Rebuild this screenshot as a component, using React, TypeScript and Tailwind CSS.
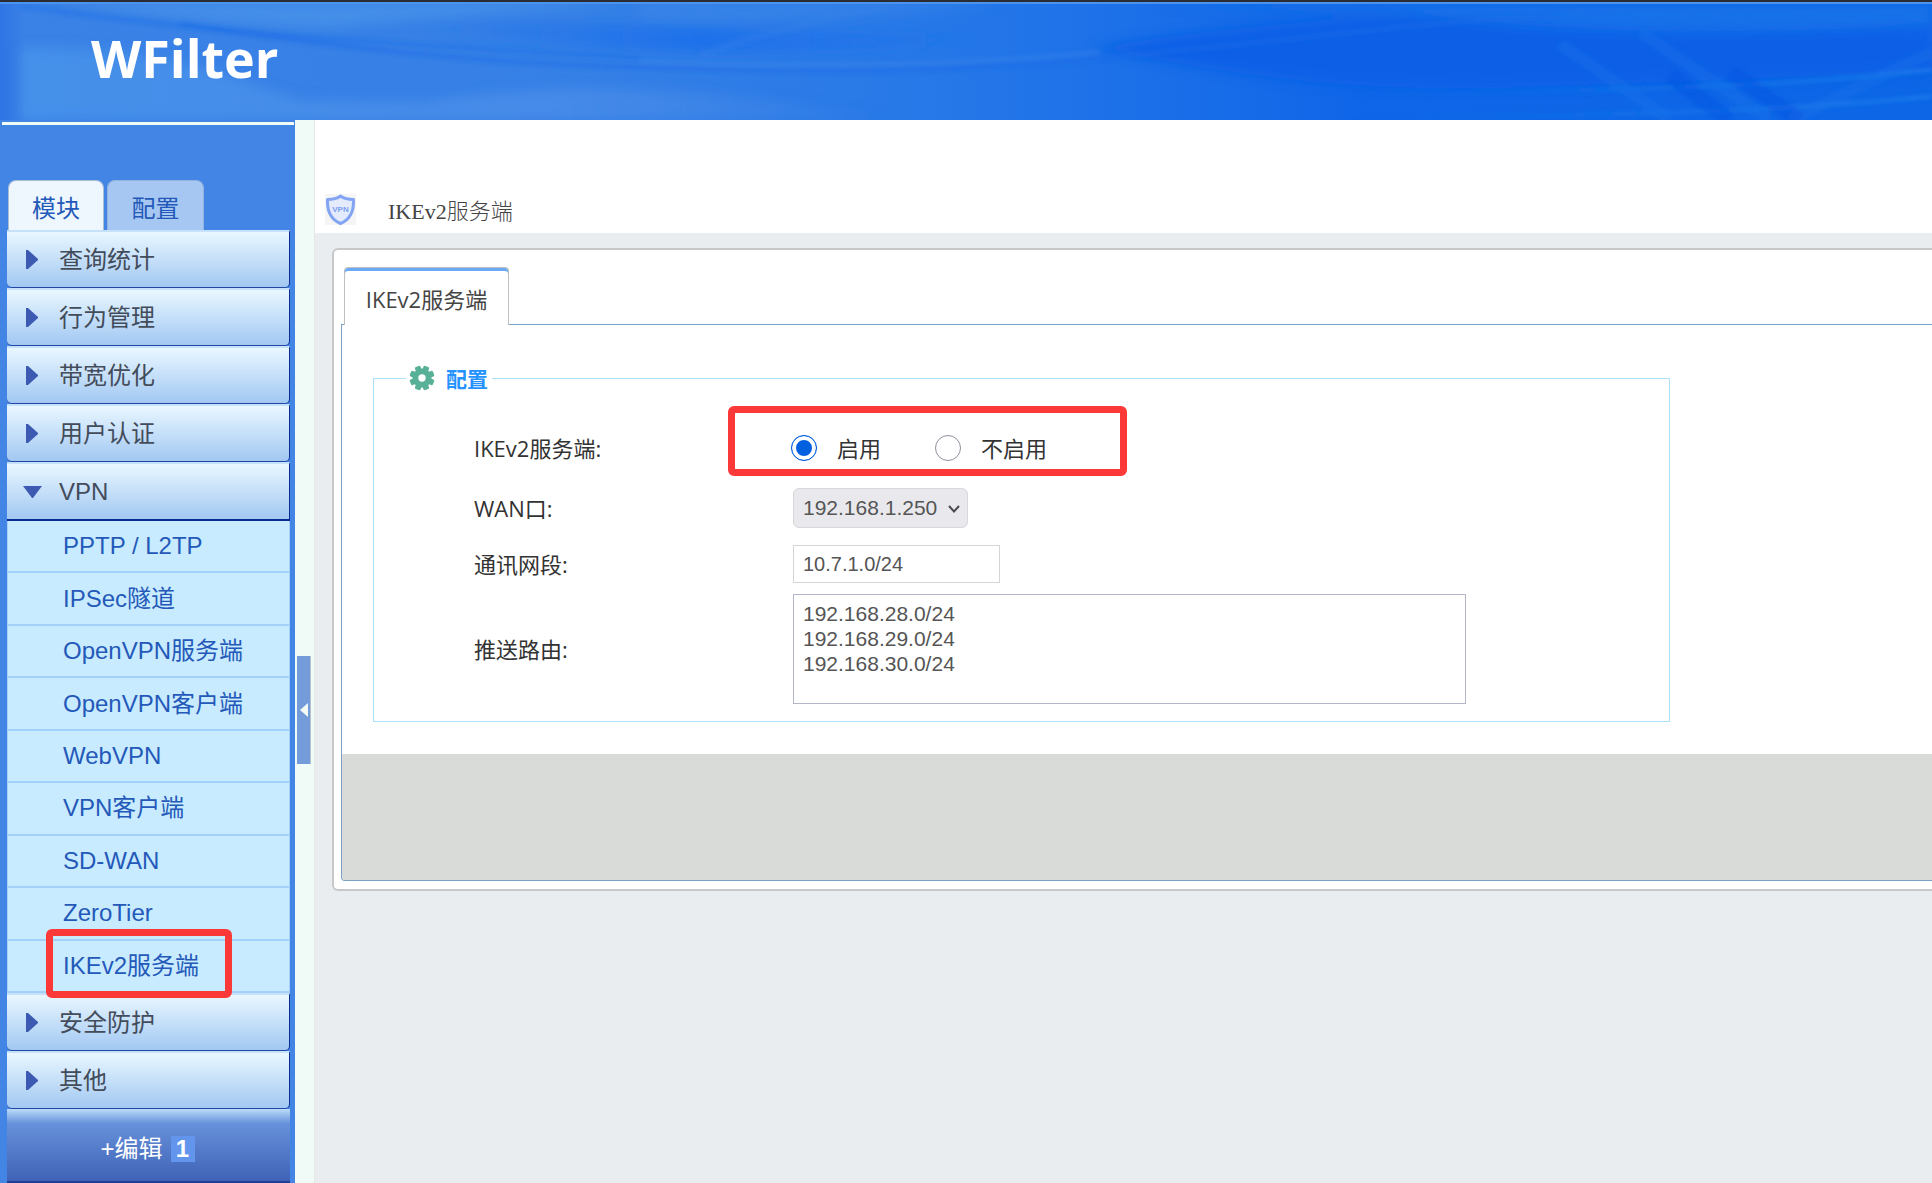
import { useState } from 'react';

type MenuItem = { label: string; open?: boolean; children?: string[] };

const MENU: MenuItem[] = [
  { label: '查询统计' },
  { label: '行为管理' },
  { label: '带宽优化' },
  { label: '用户认证' },
  {
    label: 'VPN',
    open: true,
    children: ['PPTP / L2TP', 'IPSec隧道', 'OpenVPN服务端', 'OpenVPN客户端', 'WebVPN', 'VPN客户端', 'SD-WAN', 'ZeroTier', 'IKEv2服务端'],
  },
  { label: '安全防护' },
  { label: '其他' },
];

const sansCls = "font-['Liberation_Sans','Noto_Sans_CJK_SC',sans-serif]";
const uiCls = "font-['Open_Sans','Noto_Sans_CJK_SC',sans-serif]";
const rowCls = 'grid grid-cols-[319px_1fr] items-center';
const radioCls = 'size-[26px] shrink-0 appearance-none rounded-full border border-[#8f8f9d] bg-white checked:border-[#0060df] checked:bg-[#0060df] checked:shadow-[inset_0_0_0_4px_white]';

export default function App() {
  return (
    <div className={`flex min-h-screen flex-col overflow-hidden bg-white ${sansCls}`}>
      <Header />
      <div className="flex flex-1">
        <Sidebar />
        <div className="w-5 shrink-0 border-r border-[#e6e8e8] bg-[#f0faf7] pt-[536px] pl-[2px]">
          <button aria-label="收起" className="flex h-[108px] w-[14px] items-center justify-center border-r border-[#b9c2cc] bg-[#749cdb]">
            <svg viewBox="0 0 8 14" className="h-[14px] w-2"><path d="M8 0v14L0 7z" fill="#f4faf4" /></svg>
          </button>
        </div>
        <Content />
      </div>
    </div>
  );
}

function Header() {
  return (
    <header className="relative h-[120px] border-t-2 border-[#2b2b33] bg-[#3982e6]">
      <HeaderWaves />
      <h1 className="relative pt-5 pl-[91px] font-['Open_Sans',sans-serif] text-[52px] leading-[72px] font-bold text-white">WFilter</h1>
    </header>
  );
}

function HeaderWaves() {
  return (
    <svg className="absolute inset-0 h-full w-full" viewBox="0 0 1932 118" preserveAspectRatio="none" aria-hidden="true">
      <defs>
        <linearGradient id="base" x1="0" x2="1">
          <stop offset="0" stopColor="#3b82e6" />
          <stop offset="0.3" stopColor="#3580e6" />
          <stop offset="0.5" stopColor="#2577e8" />
          <stop offset="0.7" stopColor="#1066e8" />
          <stop offset="1" stopColor="#0c66e6" />
        </linearGradient>
        <linearGradient id="foot" x1="0" x2="1">
          <stop offset="0" stopColor="#4590e9" />
          <stop offset="0.6" stopColor="#468ae8" />
          <stop offset="1" stopColor="#468ae8" stopOpacity="0" />
        </linearGradient>
        <linearGradient id="band" x1="0" x2="1">
          <stop offset="0" stopColor="#1f71ea" stopOpacity="0" />
          <stop offset="0.5" stopColor="#1f71ea" />
          <stop offset="1" stopColor="#1f71ea" stopOpacity="0.3" />
        </linearGradient>
        <linearGradient id="edge" x1="0" x2="1">
          <stop offset="0" stopColor="#2f74e4" />
          <stop offset="1" stopColor="#2f74e4" stopOpacity="0" />
        </linearGradient>
        <linearGradient id="streak" gradientUnits="userSpaceOnUse" x1="1350" x2="1932" y1="0" y2="0">
          <stop offset="0" stopColor="#1a7cea" stopOpacity="0" />
          <stop offset="1" stopColor="#2080ec" />
        </linearGradient>
        <filter id="soft" x="-10%" y="-40%" width="120%" height="180%"><feGaussianBlur stdDeviation="6" /></filter>
        <filter id="thin" x="-10%" y="-40%" width="120%" height="180%"><feGaussianBlur stdDeviation="2" /></filter>
      </defs>
      <rect width="1932" height="118" fill="url(#base)" />
      <g filter="url(#soft)">
        <path d="M60 0H620C520 10 420 16 330 26C220 22 140 12 60 0Z" fill="#4690e9" opacity="0.9" />
        <path d="M20 46C160 44 220 70 300 98L420 100C500 88 580 84 650 88C740 92 830 104 900 118H20Z" fill="url(#foot)" />
        <path d="M420 20C540 16 680 26 980 36C860 52 640 60 420 30Z" fill="url(#band)" />
        <path d="M640 0H1000C900 14 760 22 640 16Z" fill="#3c87ea" opacity="0.6" />
        <path d="M1090 46C1260 20 1400 10 1520 14L1932 26V70L1500 86C1300 90 1180 60 1090 46Z" fill="#0a61e6" />
        <path d="M1150 2H1932V22C1740 34 1560 32 1400 10Z" fill="#1a78e9" opacity="0.7" />
      </g>
      <g filter="url(#thin)" fill="none">
        <path d="M20 4C220 32 420 44 640 56" stroke="#1f70e9" strokeWidth="4" opacity="0.6" />
        <path d="M180 22C340 46 500 64 680 66C900 74 1040 64 1180 48C1340 34 1440 16 1560 16" stroke="#1a6ae8" strokeWidth="4" opacity="0.6" />
        <path d="M640 60C760 66 960 64 1100 50" stroke="#3c86ea" strokeWidth="4" opacity="0.4" />
        <path d="M700 54C760 30 820 18 890 4" stroke="#3482ea" strokeWidth="8" opacity="0.3" />
        <path d="M1350 90C1640 90 1780 84 1932 68M1350 116C1640 114 1800 108 1932 94" stroke="url(#streak)" strokeWidth="3" />
        <path d="M1560 42L1670 118M1640 30L1770 118M1932 50L1790 118" stroke="#1a78ea" strokeWidth="12" opacity="0.3" />
        <path d="M1670 74L1730 118M1730 70L1800 118" stroke="#0b50e2" strokeWidth="16" opacity="0.4" />
      </g>
      <rect width="24" height="118" fill="url(#edge)" />
      <rect width="1932" height="2" fill="#4a94ee" />
    </svg>
  );
}

function Sidebar() {
  return (
    <nav className="flex w-[295px] shrink-0 flex-col bg-[#4285e4] pt-[2px] pr-px pl-[2px]">
      <div className="h-[3px] bg-[#f0faf7]" />
      <div className="mt-[55px] flex gap-[3px] pl-[6px] text-2xl text-[#2359b8]">
        <button className="h-[50px] w-24 rounded-t-lg border border-b-0 border-[#a9bdd6] bg-[#eef6fe] pt-[6px]">模块</button>
        <button className="h-[50px] w-[97px] rounded-t-lg border border-b-0 border-[#93b2e0] bg-[#a6c7f2] pt-[6px]">配置</button>
      </div>
      <div className="ml-[5px] flex w-[283px] flex-1 flex-col">
        {MENU.map((item) => (
          <div key={item.label}>
            <button
              className={`flex w-full items-center border-t-2 border-r border-t-[#c5e2fa] border-r-[#0a2d8f] bg-linear-to-b from-[#e9f7ff] to-[#a2c8f2] text-2xl text-[#434c5a] ${
                item.open ? 'h-[59px] border-b-2 border-b-[#062c92]' : 'h-[58px] rounded-b-[5px] border-b border-b-[#2346a4]'
              }`}
            >
              <span className="flex w-[52px] justify-center pr-[2px]">
                {item.open ? (
                  <svg viewBox="0 0 19 12" className="h-3 w-[19px]"><path d="M0 0h19L10 12H9z" fill="#3c5ab2" /></svg>
                ) : (
                  <svg viewBox="0 0 12 19" className="h-[19px] w-3"><path d="M0 0h2L12 9v1L2 19H0z" fill="#3c5ab2" /></svg>
                )}
              </span>
              {item.label}
            </button>
            {item.children && <SubMenu items={item.children} />}
          </div>
        ))}
        <button className="flex min-h-[73px] flex-1 items-center justify-center border-b-2 border-[#203f98] bg-linear-to-b from-[#bcdcf8] via-[#6791da] via-20% to-[#3f62b6] pt-2 pr-[2px] text-2xl text-white">
          +编辑
          <span className="ml-2 w-6 bg-[#6495ed] text-center leading-[26px] font-bold">1</span>
        </button>
      </div>
    </nav>
  );
}

function SubMenu({ items }: { items: string[] }) {
  return (
    <ul className="grid h-[472px] auto-rows-fr">
      {items.map((label) => (
        <li key={label} className="relative flex border-x border-b-2 border-x-[#a3d1fa] border-b-[#a3d1fa] bg-[#c8ebff]">
          <a href="#" className="flex flex-1 items-center pl-[55px] text-2xl text-[#2459b9]">{label}</a>
          {label === 'IKEv2服务端' && <span className="absolute -top-3 left-[38px] h-[69px] w-[186px] rounded-md border-[7px] border-[#fc3939]" />}
        </li>
      ))}
    </ul>
  );
}

function Content() {
  return (
    <main className="flex min-w-0 flex-1 flex-col bg-[#e9edf0]">
      <div className="flex h-[113px] items-end bg-white pb-2 pl-[10px]">
        <ShieldIcon />
        <h2 className="pl-8 font-['Liberation_Serif','Noto_Sans_CJK_SC',serif] text-[22px] leading-[26px] font-light text-[#444]">IKEv2服务端</h2>
      </div>
      {/* the panel runs past the right edge of the window */}
      <section className="mt-[15px] ml-[17px] rounded-l-md border-2 border-r-0 border-[#c6c8c9] bg-white pt-[17px] pb-2 pl-[7px]">
        <div className={`relative z-10 -mb-px flex pl-[3px] ${uiCls}`}>
          <button className="h-[58px] w-[165px] rounded-t-[4px] border-x border-t border-[#c0c0c0] bg-white pt-[5px] text-[22px] text-[#444] shadow-[inset_0_3px_0_#69a9f5]">
            IKEv2服务端
          </button>
        </div>
        <div className="rounded-bl-[4px] border border-r-0 border-[#7ba1c2]">
          <ConfigForm />
          <div className="h-[126px] rounded-bl-[3px] bg-[#d9dbd8]" />
        </div>
      </section>
    </main>
  );
}

function ConfigForm() {
  const [enabled, setEnabled] = useState(true);
  const [subnet, setSubnet] = useState('10.7.1.0/24');
  const [routes, setRoutes] = useState('192.168.28.0/24\n192.168.29.0/24\n192.168.30.0/24');

  return (
    <form className={`px-[31px] pt-[37px] pb-8 text-[22px] text-[#333] ${uiCls}`}>
      <fieldset className="max-w-[1297px] border border-[#ade0fb] pb-[17px] pl-8">
        <legend className="flex h-8 items-center gap-[11px] pr-1 pl-[3px] text-[21px] font-bold text-[#2492ff]">
          <GearIcon />
          <span className="pt-[3px]">配置</span>
        </legend>
        <div className="pt-5 pl-[68px]">
          <div className={`h-[68px] ${rowCls}`} role="radiogroup" aria-labelledby="ike">
            <span id="ike">IKEv2服务端:</span>
            <div className="relative -ml-[2px] flex h-full items-center">
              <span className="absolute -top-2 -left-[63px] h-[70px] w-[399px] rounded-[6px] border-[7px] border-[#fc3939]" />
              <label className="relative flex w-36 items-center gap-5">
                <input type="radio" name="enabled" className={radioCls} checked={enabled} onChange={() => setEnabled(true)} />
                启用
              </label>
              <label className="relative flex items-center gap-5">
                <input type="radio" name="enabled" className={radioCls} checked={!enabled} onChange={() => setEnabled(false)} />
                不启用
              </label>
            </div>
          </div>
          <div className={`h-[52px] ${rowCls}`}>
            <label htmlFor="wan">WAN口:</label>
            <div className="relative w-[175px]">
              <select id="wan" className={`h-10 w-full appearance-none rounded-md border border-[#d8d8dc] bg-[#e9e9ed] pl-[9px] text-[21px] text-[#555] ${sansCls}`}>
                <option>192.168.1.250</option>
              </select>
              <svg viewBox="0 0 12 8" className="pointer-events-none absolute top-[17px] right-2 h-2 w-3"><path d="M1 1l5 5.500 5-5.500" fill="none" stroke="#4a4a4f" strokeWidth="2" /></svg>
            </div>
          </div>
          <div className={`h-[60px] ${rowCls}`}>
            <label htmlFor="subnet">通讯网段:</label>
            <input id="subnet" className={`h-[38px] w-[207px] border border-[#d5d5d5] pl-[9px] text-[20px] text-[#555] ${sansCls}`} value={subnet} onChange={(e) => setSubnet(e.target.value)} />
          </div>
          <div className={rowCls}>
            <label htmlFor="routes">推送路由:</label>
            <textarea
              id="routes"
              className={`block h-[110px] w-[673px] resize-none border border-[#b3b5c8] px-[9px] py-[6px] text-[21px] leading-[25px] text-[#555] ${sansCls}`}
              value={routes}
              onChange={(e) => setRoutes(e.target.value)}
            />
          </div>
        </div>
      </fieldset>
    </form>
  );
}

function ShieldIcon() {
  return (
    <svg viewBox="0 0 31 31" className="size-[31px] shrink-0 bg-[#f5f5f5]" role="img" aria-label="VPN">
      <path d="M15.500 2C12 4.500 7 5.500 2.500 5.500C2 17 6 25.500 15.500 29.500C25 25.500 29 17 28.500 5.500C24 5.500 19 4.500 15.500 2Z" fill="#e3ebfd" stroke="#83a4f3" strokeWidth="3" strokeLinejoin="round" />
      <text x="15.500" y="17.500" textAnchor="middle" fontFamily="Liberation Sans" fontSize="8" fontWeight="700" fill="#7d9ff0">VPN</text>
    </svg>
  );
}

function GearIcon() {
  return (
    <svg viewBox="-13 -13 26 26" className="size-[26px]" aria-hidden="true">
      <g fill="#58b096">
        {[22.5, 67.5, 112.5, 157.5].map((a) => (
          <rect key={a} x="-3" y="-12.500" width="6" height="25" rx="1.500" transform={`rotate(${a})`} />
        ))}
        <circle r="9.500" />
      </g>
      <circle r="3.700" fill="#fff" />
    </svg>
  );
}
